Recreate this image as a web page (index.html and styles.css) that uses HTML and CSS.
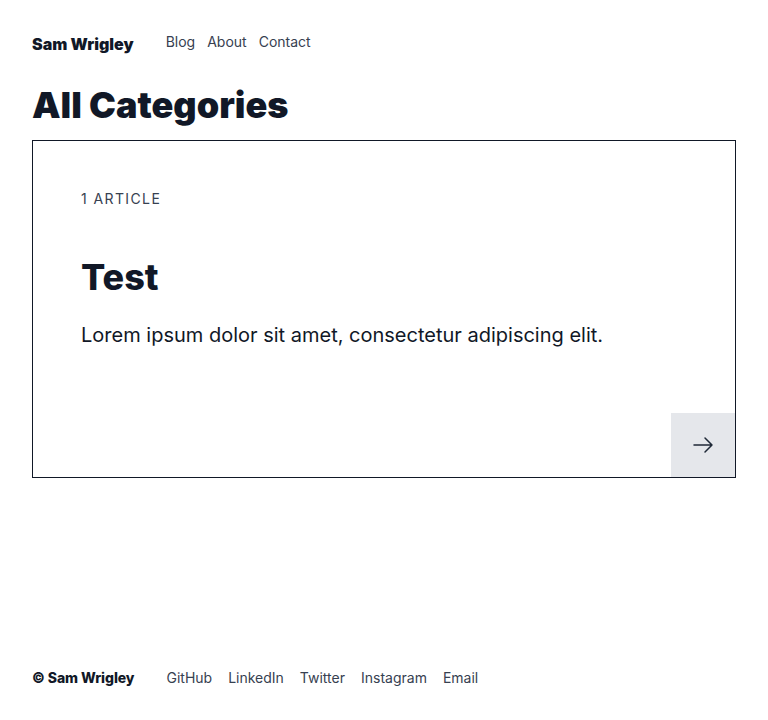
FILE: index.html
```html
<!DOCTYPE html>
<html lang="en">
<head>
<meta charset="utf-8">
<title>All Categories</title>
<link rel="stylesheet" href="styles.css">
</head>
<body>
<div class="page">
  <header class="site-header">
    <a class="brand" href="#">Sam Wrigley</a>
    <nav class="nav">
      <a href="#">Blog</a>
      <a href="#">About</a>
      <a href="#">Contact</a>
    </nav>
  </header>
  <main class="main">
    <h1 class="page-title">All Categories</h1>
    <a class="card" href="#">
      <div class="card-body">
        <p class="card-count">1 Article</p>
        <h2 class="card-title">Test</h2>
        <p class="card-text">Lorem ipsum dolor sit amet, consectetur adipiscing elit.</p>
      </div>
      <div class="card-actions">
        <span class="card-arrow">
          <svg width="24" height="24" viewBox="0 0 24 24" fill="none" stroke="currentColor" stroke-width="1.5" stroke-linecap="round" stroke-linejoin="round"><path d="M3 12h18M14 5l7 7-7 7"/></svg>
        </span>
      </div>
    </a>
  </main>
  <footer class="site-footer">
    <span class="copy">© Sam Wrigley</span>
    <nav class="footer-nav">
      <a href="#">GitHub</a>
      <a href="#">LinkedIn</a>
      <a href="#">Twitter</a>
      <a href="#">Instagram</a>
      <a href="#">Email</a>
    </nav>
  </footer>
</div>
</body>
</html>
```
FILE: styles.css
```css
* { box-sizing: border-box; }
html, body { margin: 0; padding: 0; }
body {
  font-family: Inter, "Noto Sans", sans-serif;
  color: #111827;
  background: #fff;
}
a { color: inherit; text-decoration: none; }
.page {
  min-height: 100vh;
  display: flex;
  flex-direction: column;
  padding: 0 32px;
}
.site-header {
  display: flex;
  align-items: flex-start;
  gap: 32px;
  padding-top: 32px;
  height: 56px;
}
.brand {
  font-weight: 900;
  font-size: 16px;
  line-height: 24px;
}
.nav { display: flex; gap: 12px; }
.nav a, .footer-nav a {
  font-size: 14px;
  line-height: 20px;
  color: #374151;
}
.main { flex: 1; padding-top: 29px; }
.page-title {
  margin: 0 0 15px;
  font-size: 36px;
  line-height: 40px;
  font-weight: 900;
}
.card {
  display: flex;
  flex-direction: column;
  border: 1px solid #111827;
}
.card-body { padding: 48px 48px 0; }
.card-count {
  margin: 0;
  font-size: 14px;
  line-height: 20px;
  letter-spacing: 0.1em;
  text-transform: uppercase;
  color: #374151;
}
.card-title {
  margin: 48px 0 0;
  font-size: 36px;
  line-height: 40px;
  font-weight: 800;
}
.card-text {
  margin: 24px 0 64px;
  font-size: 20px;
  line-height: 28px;
}
.card-actions { display: flex; justify-content: flex-end; }
.card-arrow {
  width: 64px;
  height: 64px;
  background: #e5e7eb;
  color: #1f2937;
  display: flex;
  align-items: center;
  justify-content: center;
}
.site-footer {
  display: flex;
  align-items: center;
  gap: 32px;
  padding-bottom: 20px;
  height: 64px;
}
.copy { font-size: 14px; font-weight: 800; line-height: 20px; letter-spacing: -0.005em; }
.footer-nav { display: flex; gap: 16px; }
```
